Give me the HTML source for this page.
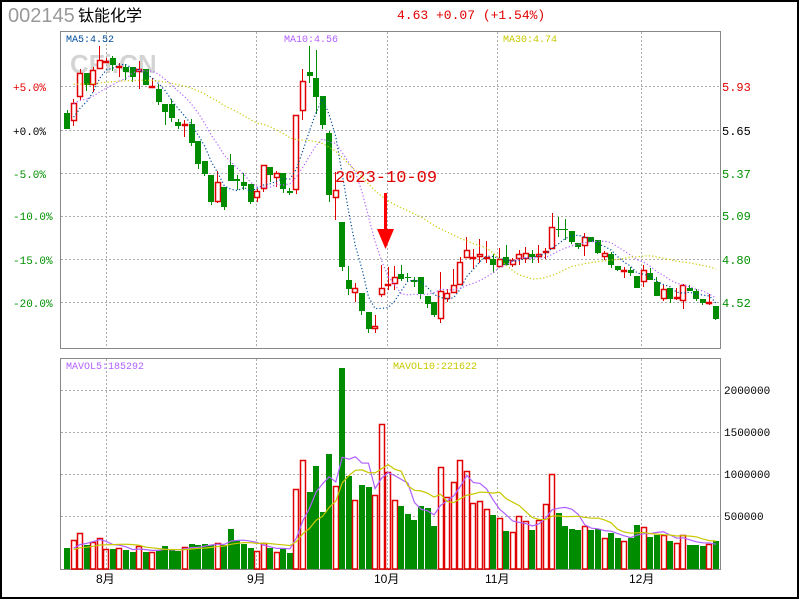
<!DOCTYPE html>
<html><head><meta charset="utf-8"><style>
html,body{margin:0;padding:0;background:#fff;}
svg{display:block;}
.m{font-family:"Liberation Mono",monospace;}
</style></head><body>
<svg id="s" width="800" height="600" xmlns="http://www.w3.org/2000/svg">
<rect x="0" y="0" width="800" height="600" fill="#fff"/>
<rect x="1" y="1" width="797" height="597" fill="none" stroke="#000" stroke-width="2"/>
<text x="8" y="22" font-family="Liberation Sans,sans-serif" font-size="20" fill="#999">002145</text>
<text x="78" y="21" font-family="Liberation Sans,'Noto Sans CJK SC',sans-serif" font-size="16" fill="#000">钛能化学</text>
<text x="397" y="19" class="m" font-size="13" fill="#e00000">4.63 +0.07 (+1.54%)</text>
<text x="70" y="73" font-family="Liberation Sans,sans-serif" font-weight="bold" font-size="26" fill="#d4d4d4">CFi.CN</text>
<g id="grid" stroke="#aaa" stroke-dasharray="2,2" stroke-width="1"></g>
<rect x="60.5" y="31.5" width="660" height="317" fill="none" stroke="#888"/>
<rect x="60.5" y="358.5" width="660" height="211" fill="none" stroke="#888"/>
<g id="g"></g>
<text x="66" y="42" class="m" font-size="10" fill="#004d99">MA5:4.52</text>
<text x="284" y="42" class="m" font-size="10" fill="#b060ff">MA10:4.56</text>
<text x="503" y="42" class="m" font-size="10" fill="#c8c800">MA30:4.74</text>
<text x="66" y="369" class="m" font-size="10" fill="#b060ff">MAVOL5:185292</text>
<text x="393" y="369" class="m" font-size="10" fill="#c8c800">MAVOL10:221622</text>
<g class="m" font-size="11">
<text x="13" y="91" fill="#e00000">+5.0%</text>
<text x="13" y="135" fill="#000">+0.0%</text>
<text x="13" y="178" fill="#009000">-5.0%</text>
<text x="13" y="220" fill="#009000">-10.0%</text>
<text x="13" y="264" fill="#009000">-15.0%</text>
<text x="13" y="307" fill="#009000">-20.0%</text>
</g>
<g class="m" font-size="12">
<text x="722" y="91" fill="#e00000">5.93</text>
<text x="722" y="135" fill="#000">5.65</text>
<text x="722" y="178" fill="#009000">5.37</text>
<text x="722" y="220" fill="#009000">5.09</text>
<text x="722" y="264" fill="#009000">4.80</text>
<text x="722" y="307" fill="#009000">4.52</text>
</g>
<g class="m" font-size="11" fill="#000">
<text x="724" y="394">2000000</text>
<text x="724" y="436">1500000</text>
<text x="724" y="478">1000000</text>
<text x="724" y="520">500000</text>
</g>
<g font-family="Liberation Sans,'Noto Sans CJK SC',sans-serif" font-size="12" fill="#000">
<text x="96" y="583">8月</text>
<text x="247" y="583">9月</text>
<text x="374" y="583">10月</text>
<text x="485" y="583">11月</text>
<text x="629" y="583">12月</text>
</g>
<text x="335" y="182" font-family="Liberation Mono,monospace" font-size="17" fill="#e00000">2023-10-09</text>
<rect x="384" y="193" width="3" height="38" fill="#f00"/>
<polygon points="377,229 394,229 385.5,249" fill="#f00"/>
</svg>
<script>
var B=[
"G 113 129 110 129","R 103 121 99 126","R 73 97 69 100","G 73 85 73 91","R 70 85 67 92","R 60 69 46 69","R 61 63 58 63","G 58 65 56 71","R 66 67 63 77","G 67 72 64 80",
"G 67 77 67 82","R 69 72 61 89","G 69 85 69 85","R 86 87 78 88","G 89 102 84 105","G 104 112 104 125","G 104 118 99 122","G 122 126 119 129","R 124 125 120 137","G 124 143 119 146",
"G 141 164 141 169","G 161 174 161 176","G 175 202 175 205","R 182 202 171 203","G 187 207 187 210","G 165 181 154 181","G 179 181 175 190","G 182 186 173 190","G 184 202 184 204","R 191 198 189 202",
"R 165 189 165 192","G 167 175 167 182","R 173 178 171 187","G 173 189 173 193","G 191 193 188 195","R 115 190 115 194","R 81 111 69 120","G 72 76 46 83","G 78 97 50 114","G 96 125 96 129",
"G 133 195 131 202","R 190 198 172 220","G 222 267 222 271","G 280 289 266 295","R 288 293 283 302","G 293 311 293 315","G 312 329 312 333","R 326 329 315 333","R 288 295 265 297","R 284 285 267 290",
"R 277 284 266 290","G 274 279 265 281","G 277 278 273 281","G 280 282 277 287","G 277 294 277 299","G 296 304 296 308","G 302 315 302 317","R 291 319 272 323","R 293 299 289 302","R 285 293 269 293",
"R 262 285 257 285","R 250 258 237 258","R 257 258 249 269","R 254 257 239 263","R 257 258 241 263","G 259 265 254 273","R 259 267 248 267","G 257 265 245 265","R 260 265 258 267","R 254 259 250 265",
"R 253 259 247 263","G 254 257 250 263","R 254 257 245 263","R 251 253 248 259","R 227 249 213 249","G 229 230 217 237","G 229 230 219 240","G 231 242 231 244","G 243 247 243 249","R 237 246 233 256",
"G 237 242 237 242","G 240 253 240 254","R 253 257 251 260","G 254 265 252 268","G 266 270 266 271","R 270 272 267 278","G 270 273 267 276","G 276 288 276 288","R 270 282 265 287","G 273 280 268 280",
"G 282 296 277 296","R 289 299 285 301","G 288 299 288 303","R 297 298 288 300","R 285 301 284 309","G 288 291 285 291","G 291 299 289 301","G 299 303 299 305","R 302 303 294 305","G 306 319 306 320"];
var V=[548,540,533,545,542,538,549,549,548,550,552,546,552,552,550,546,550,551,547,544,545,544,545,543,545,529,540,544,548,551,543,548,552,548,553,489,460,492,466,512,454,486,368,476,500,485,487,495,424,472,500,506,514,520,506,508,526,467,497,482,460,471,503,501,509,515,518,531,532,516,521,530,520,504,474,513,526,529,530,526,530,529,538,533,538,541,538,525,527,537,535,535,541,543,535,545,545,546,544,541];
var NS="http://www.w3.org/2000/svg",g=document.getElementById('g'),gr=document.getElementById('grid');
function el(t,a,p){var e=document.createElementNS(NS,t);for(var k in a)e.setAttribute(k,a[k]);(p||g).appendChild(e);return e;}
[86,130,173,216,259,302].forEach(function(y){el('line',{x1:61,x2:720,y1:y+.5,y2:y+.5},gr);});
[390,432,474,516].forEach(function(y){el('line',{x1:61,x2:720,y1:y+.5,y2:y+.5},gr);});
[106,256,387,497,641].forEach(function(x){el('line',{x1:x+.5,x2:x+.5,y1:32,y2:348},gr);el('line',{x1:x+.5,x2:x+.5,y1:359,y2:569},gr);});
var RED="#e00000",GRN="#008c00",closes=[];
function X(i){return 64+6.555*i;}
for(var i=0;i<B.length;i++){var p=B[i].split(' '),c=p[0],t=+p[1],b=+p[2],wt=+p[3],wb=+p[4],x=X(i),cx=Math.round(x+2.5)+.5;
 closes.push(c=='G'?b:t);
 var col=c=='G'?GRN:RED;
 el('line',{x1:cx,x2:cx,y1:wt,y2:wb,stroke:col});
 if(c=='G')el('rect',{x:Math.round(x),y:t,width:6,height:Math.max(b-t,1),fill:col});
 else el('rect',{x:Math.round(x)+.5,y:t+.5,width:5,height:Math.max(b-t-1,1),fill:'#fff',stroke:col,'stroke-width':1.5});
 var v=V[i];
 if(c=='G')el('rect',{x:Math.round(x),y:v,width:6,height:569-v,fill:GRN});
 else el('rect',{x:Math.round(x)+.5,y:v+.5,width:5,height:569-v-.5,fill:'none',stroke:RED,'stroke-width':1.5});
}
function ma(arr,n,pad){var o=[];for(var i=0;i<arr.length;i++){var s=0,k=0;for(var j=i-n+1;j<=i;j++){s+=j<0?pad:arr[j];k++;}o.push(s/k);}return o;}
function line(a,col,dash,start){var d='';for(var i=start;i<a.length;i++){d+=(i==start?'M':'L')+(X(i)+3).toFixed(1)+' '+a[i].toFixed(1);}
 var at={d:d,fill:'none',stroke:col,'stroke-width':1.2};if(dash)at['stroke-dasharray']='1.2,2.2';el('path',at);}
line(ma(closes,5,118),'#004d99',1,1);
line(ma(closes,10,100),'#b060ff',1,1);
line(ma(closes,30,82),'#c8c800',1,1);
var vv=V.map(function(y){return 569-y;});
line(ma(vv,5,18).map(function(h){return 569-h;}),'#b060ff',0,1);
line(ma(vv,10,18).map(function(h){return 569-h;}),'#c8c800',0,1);
</script>
</body></html>
